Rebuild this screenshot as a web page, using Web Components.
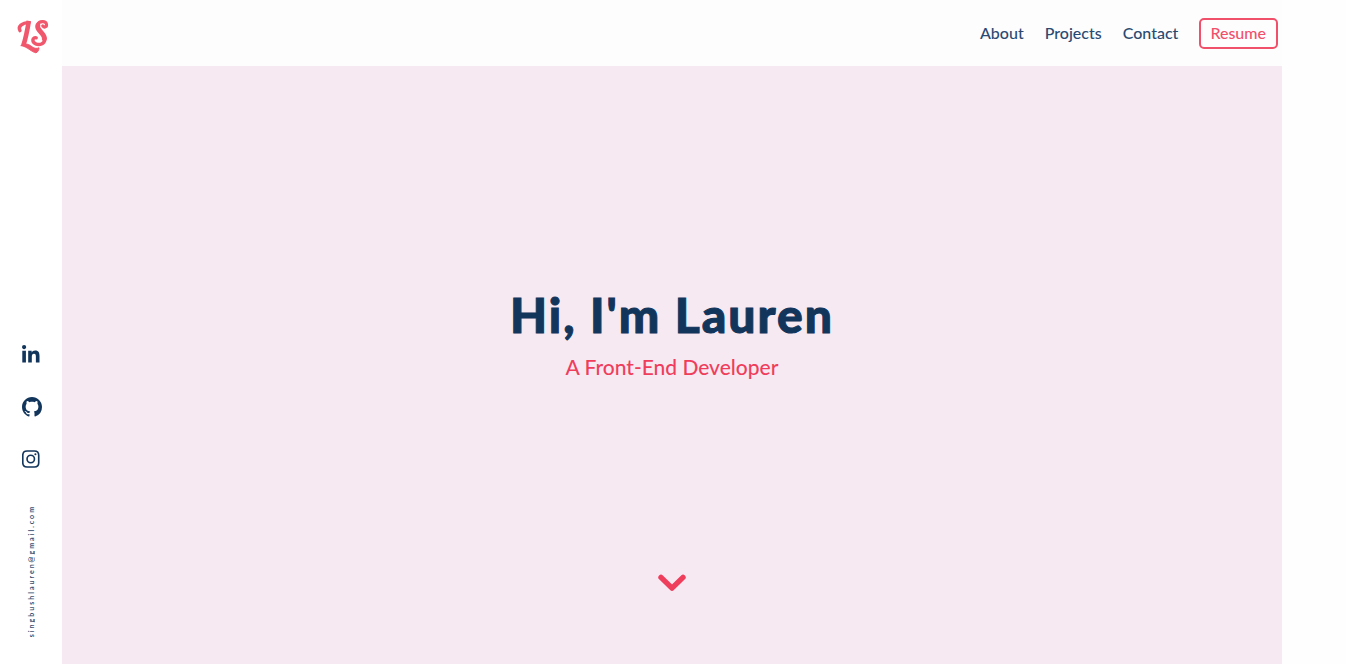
<!DOCTYPE html>
<html lang="en">
<head>
<meta charset="utf-8">
<meta name="viewport" content="width=device-width, initial-scale=1">
<title>Lauren | Front-End Developer</title>
<style>
  :root { --navy: #12355b; --red: #ef3e5c; --blush: #f7e9f2; --rail: 62px; --bar: 66px; }
  body { margin: 0; background: #fefefe; color: var(--navy); font-family: Lato, "Liberation Sans", sans-serif; }
</style>
</head>
<body>
<portfolio-page>
  <side-rail slot="rail"></side-rail>
  <top-nav slot="nav"></top-nav>
  <hero-banner slot="hero">
    <span slot="title">Hi, I'm Lauren</span>
    <span slot="role">A Front-End Developer</span>
  </hero-banner>
</portfolio-page>

<script>
const define = (name, html) => customElements.define(name, class extends HTMLElement {
  constructor() {
    super();
    const t = document.createElement('template');
    t.innerHTML = html;
    this.attachShadow({ mode: 'open' }).append(t.content.cloneNode(true));
  }
});

define('portfolio-page', `
<style>
  :host { display: grid; grid-template-columns: var(--rail) minmax(0, 1fr) 64px; min-height: 100vh; }
  .main { display: flex; flex-direction: column; }
  ::slotted(hero-banner) { flex: 1; }
</style>
<slot name="rail"></slot>
<div class="main"><slot name="nav"></slot><slot name="hero"></slot></div>`);

define('side-rail', `
<style>
  :host { display: flex; flex-direction: column; justify-content: space-between; align-items: center; box-sizing: border-box; padding: 16px 0 27px; background: #fff; }
  a { color: inherit; text-decoration: none; }
  svg { display: block; }
  .logo { padding-left: 2px; }
  .logo svg { width: 40px; height: 40px; }
  .bottom { display: flex; flex-direction: column; align-items: center; gap: 36px; }
  ul { list-style: none; margin: 0; padding: 0 0 0 2px; display: grid; gap: 32px; }
  li svg { height: 20px; fill: currentColor; }
  .mail { writing-mode: vertical-rl; transform: rotate(180deg); font-size: 7px; line-height: 12px; letter-spacing: 2px; font-weight: 700; color: #365374; }
</style>
<a class="logo" href="#home" aria-label="LS home">
  <svg viewBox="12 16 40 40" fill="none" stroke="#f0566c" stroke-linecap="round" stroke-linejoin="round">
    <path stroke-width="3.4" d="M20 30.6C17.6 26.4 22 22.8 29 22.6"/>
    <path stroke-width="4.6" stroke-linecap="butt" d="M28.8 20.9C27.6 29 25.8 38 23.2 46"/>
    <path fill="#f0566c" stroke-width="1" d="M21.2 45.6C26 42.6 29 44.4 32 46.8C34.6 48.8 37 48.6 39 47.8C39 50 38 52 36 52.8C32 52.4 27 46.4 21.2 45.6Z"/>
    <path stroke-width="3.2" d="M42.8 26C44.6 28 47 26.6 46.4 24C45.6 20.8 39.4 20.8 37.4 24.8"/>
    <path stroke-width="5" d="M37.8 25.6C36.4 30.4 44.8 33.4 44.4 38.6"/>
    <path stroke-width="3.4" d="M45 38.6C44.7 44.4 39.2 45.4 35.7 43.9C31.4 42 32.4 36.8 36.2 37.8"/>
  </svg>
</a>
<div class="bottom">
  <ul>
    <li><a href="#linkedin" aria-label="LinkedIn"><svg viewBox="0 0 448 512"><path d="M100.28 448H7.4V148.9h92.88zM53.79 108.1C24.09 108.1 0 83.5 0 53.8a53.79 53.79 0 0 1 107.58 0c0 29.7-24.1 54.3-53.79 54.3zM447.9 448h-92.68V302.4c0-34.7-.7-79.2-48.29-79.2-48.29 0-55.69 37.7-55.69 76.7V448h-92.78V148.9h89.08v40.8h1.3c12.4-23.5 42.69-48.3 87.88-48.3 94 0 111.28 61.9 111.28 142.3V448z"/></svg></a></li>
    <li><a href="#github" aria-label="GitHub"><svg viewBox="0 0 16 16"><path d="M8 0C3.58 0 0 3.58 0 8c0 3.54 2.29 6.53 5.47 7.59.4.07.55-.17.55-.38 0-.19-.01-.82-.01-1.49-2.01.37-2.53-.49-2.69-.94-.09-.23-.48-.94-.82-1.13-.28-.15-.68-.52-.01-.53.63-.01 1.08.58 1.23.82.72 1.21 1.87.87 2.33.66.07-.52.28-.87.51-1.07-1.78-.2-3.64-.89-3.64-3.95 0-.87.31-1.59.82-2.15-.08-.2-.36-1.02.08-2.12 0 0 .67-.21 2.2.82.64-.18 1.32-.27 2-.27s1.36.09 2 .27c1.53-1.04 2.2-.82 2.2-.82.44 1.1.16 1.92.08 2.12.51.56.82 1.27.82 2.15 0 3.07-1.87 3.75-3.65 3.95.29.25.54.73.54 1.48 0 1.07-.01 1.93-.01 2.2 0 .21.15.46.55.38A8.01 8.01 0 0 0 16 8c0-4.42-3.58-8-8-8z"/></svg></a></li>
    <li><a href="#instagram" aria-label="Instagram"><svg viewBox="0 0 448 512"><path fill="none" stroke="currentColor" stroke-width="42" d="M130 52H318Q428 52 428 162V350Q428 460 318 460H130Q20 460 20 350V162Q20 52 130 52Z"/><circle cx="224" cy="256" r="95" fill="none" stroke="currentColor" stroke-width="42"/><circle cx="343" cy="136" r="27"/></svg></a></li>
  </ul>
  <a class="mail" href="mailto:singbushlauren@gmail.com">singbushlauren@gmail.com</a>
</div>`);

define('top-nav', `
<style>
  :host { display: block; background: #fdfdfd; }
  nav { display: flex; justify-content: flex-end; align-items: center; gap: 21px; box-sizing: border-box; min-height: var(--bar); padding: 0 4px; font-size: 16px; line-height: 19px; font-weight: 500; }
  a { padding: 3px 0 5px; color: #2a4a72; text-decoration: none; }
  .resume { padding-left: 9px; padding-right: 10px; border: 2px solid #f1506a; border-radius: 5px; color: #f1506a; }
</style>
<nav aria-label="Main">
  <a href="#about">About</a><a href="#projects">Projects</a><a href="#contact">Contact</a><a class="resume" href="#resume">Resume</a>
</nav>`);

define('hero-banner', `
<style>
  :host { display: grid; grid-template-rows: 1fr auto 1fr; justify-items: center; box-sizing: border-box; padding-bottom: var(--bar); background: var(--blush); text-align: center; }
  header { grid-row: 2; }
  h1 { margin: 0; font-size: 48px; line-height: 62px; font-weight: 900; letter-spacing: 2px; -webkit-text-stroke: 1px currentColor; }
  p { margin: 8px 0 0; font-size: 21px; line-height: 26px; font-weight: 500; color: var(--red); }
  a { grid-row: 3; align-self: end; color: var(--red); }
  svg { display: block; width: 28px; height: 32px; }
</style>
<header><h1><slot name="title"></slot></h1><p><slot name="role"></slot></p></header>
<a href="#about" aria-label="Scroll to about"><svg viewBox="0 0 448 512" fill="none" stroke="currentColor" stroke-width="86" stroke-linecap="round" stroke-linejoin="round"><path d="M48 182L224 354L400 182"/></svg></a>`);
</script>
</body>
</html>
